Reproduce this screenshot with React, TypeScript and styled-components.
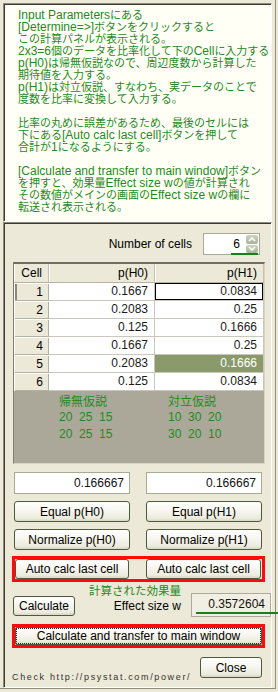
import styled, { createGlobalStyle } from "styled-components";

const GlobalStyle = createGlobalStyle`
  html, body {
    margin: 0;
    padding: 0;
    background: #ece9d8;
  }
  body {
    font-family: "Liberation Sans", Arial, sans-serif;
    font-size: 12px;
    color: #000;
  }
  * {
    box-sizing: border-box;
  }
`;

const GREEN = "#1f8a1f";

const help = [
  [
    "Input Parametersにある",
    "[Determine=>]ボタンをクリックすると",
    "この計算パネルが表示される。",
    "2x3=6個のデータを比率化して下のCellに入力する",
    "p(H0)は帰無仮説なので、周辺度数から計算した",
    "期待値を入力する。",
    "p(H1)は対立仮説、すなわち、実データのことで",
    "度数を比率に変換して入力する。",
  ],
  [
    "比率の丸めに誤差があるため、最後のセルには",
    "下にある[Auto calc last cell]ボタンを押して",
    "合計が1になるようにする。",
  ],
  [
    "[Calculate and transfer to main window]ボタン",
    "を押すと、効果量Effect size wの値が計算され",
    "その数値がメインの画面のEffect size wの欄に",
    "転送され表示される。",
  ],
];

const cells = [
  { h0: "0.1667", h1: "0.0834" },
  { h0: "0.2083", h1: "0.25" },
  { h0: "0.125", h1: "0.1666" },
  { h0: "0.1667", h1: "0.25" },
  { h0: "0.2083", h1: "0.1666" },
  { h0: "0.125", h1: "0.0834" },
];

// latin runs are drawn a bit larger than the kana/kanji, like the old java font
const mixed = (line: string) =>
  line
    .split(/([\x20-\x7e]+)/)
    .map((part, i) => (i % 2 === 1 ? <Latin key={i}>{part}</Latin> : part));

const Arrow = ({ up }: { up?: boolean }) => (
  <svg width="8" height="6" viewBox="0 0 8 6">
    <polyline
      points={up ? "1,5 4,2 7,5" : "1,1 4,4 7,1"}
      fill="none"
      stroke="#fff"
      strokeWidth="1.6"
    />
  </svg>
);

export default function App() {
  return (
    <Frame>
      <GlobalStyle />
      <HelpBox>
        {help.map((para, i) => (
          <Para key={i}>
            {para.map((line, j) => (
              <Line key={j}>{mixed(line)}</Line>
            ))}
          </Para>
        ))}
      </HelpBox>

      <Panel>
        <SpinRow>
          <span>Number of cells</span>
          <SpinBox>
            <SpinValue>6</SpinValue>
            <SpinButtons>
              <SpinButton>
                <Arrow up />
              </SpinButton>
              <SpinButton>
                <Arrow />
              </SpinButton>
            </SpinButtons>
            <Mark $left={27} $top={19} $width={27} />
          </SpinBox>
        </SpinRow>

        <Table>
          <HeadRow>
            <HeadCell>Cell</HeadCell>
            <HeadCell>p(H0)</HeadCell>
            <HeadCell>p(H1)</HeadCell>
          </HeadRow>
          {cells.map((c, i) => (
            <Row key={i}>
              <NumCell $current={i === 0}>{i + 1}</NumCell>
              <ValCell>{c.h0}</ValCell>
              <ValCell $focus={i === 0} $selected={i === 4}>
                {c.h1}
              </ValCell>
            </Row>
          ))}
          <Hypo>
            <div>
              <HypoTitle>帰無仮説</HypoTitle>
              <div>20  25  15</div>
              <div>20  25  15</div>
            </div>
            <div>
              <HypoTitle>対立仮説</HypoTitle>
              <div>10  30  20</div>
              <div>30  20  10</div>
            </div>
          </Hypo>
        </Table>

        <Pair $mt={8} $h={22}>
          <Field readOnly defaultValue="0.166667" />
          <Field readOnly defaultValue="0.166667" />
        </Pair>
        <Pair $mt={7} $h={21}>
          <Button>Equal p(H0)</Button>
          <Button>Equal p(H1)</Button>
        </Pair>
        <Pair $mt={7} $h={21}>
          <Button>Normalize p(H0)</Button>
          <Button>Normalize p(H1)</Button>
        </Pair>

        <Hilite $mt={9} $h={20}>
          <AutoGrid>
            <Button>Auto calc last cell</Button>
            <Button>Auto calc last cell</Button>
          </AutoGrid>
        </Hilite>

        <EffectRow>
          <CalcButton>Calculate</CalcButton>
          <EffectLabels>
            <EffectCaption>計算された効果量</EffectCaption>
            <EffectName>Effect size w</EffectName>
          </EffectLabels>
          <EffectBox>
            0.3572604
            <Mark $left={4} $top={18} $width={86} />
          </EffectBox>
        </EffectRow>

        <Hilite $mt={10} $h={18}>
          <TransferButton>Calculate and transfer to main window</TransferButton>
        </Hilite>

        <BottomRow>
          <CheckText>Check http://psystat.com/power/</CheckText>
          <CloseButton>Close</CloseButton>
        </BottomRow>
      </Panel>
    </Frame>
  );
}

const Frame = styled.div`
  width: 276px;
  height: 689px;
  padding: 3px 0 0 3px;
  border-right: 1px solid #8f8e80;
  border-bottom: 1px solid #8f8e80;
`;

const sunken = `
  border: 1px solid;
  border-color: #8d8b7d #ffffff #ffffff #8d8b7d;
  box-shadow: inset 1px 1px 0 #3a3932;
`;

const HelpBox = styled.div`
  ${sunken}
  width: 269px;
  height: 219px;
  padding: 4px 0 0 14px;
  background: #fffff6;
  color: ${GREEN};
  font-family: "Noto Sans CJK JP", sans-serif;
  font-size: 11px;
`;

const Para = styled.div`
  & + & {
    margin-top: 12px;
  }
`;

const Line = styled.div`
  height: 12px;
  line-height: 12px;
  white-space: nowrap;
`;

const Latin = styled.span`
  font-family: "Liberation Sans", Arial, sans-serif;
  font-size: 12px;
  line-height: 12px;
`;

const Panel = styled.div`
  ${sunken}
  width: 269px;
  height: 466px;
  padding: 10px 7px 0 9px;
  display: flex;
  flex-direction: column;
`;

const SpinRow = styled.div`
  height: 22px;
  display: flex;
  align-items: center;
  justify-content: flex-end;
  gap: 11px;
  padding-right: 4px;
`;

const SpinBox = styled.div`
  position: relative;
  width: 57px;
  height: 22px;
  display: flex;
  align-items: center;
  background: #fff;
  border: 1px solid #a6ac94;
`;

const SpinValue = styled.span`
  flex: 1;
  text-align: right;
  padding-right: 6px;
`;

const SpinButtons = styled.div`
  width: 12px;
  height: 100%;
  padding: 1px 0;
  margin-right: 1px;
  display: flex;
  flex-direction: column;
  gap: 1px;
`;

const SpinButton = styled.div`
  flex: 1;
  display: flex;
  align-items: center;
  justify-content: center;
  border-radius: 2px;
  background: linear-gradient(180deg, #ccd4c0, #a8b39a);
`;

const Mark = styled.div<{ $left: number; $top: number; $width: number }>`
  position: absolute;
  left: ${(p) => p.$left}px;
  top: ${(p) => p.$top}px;
  width: ${(p) => p.$width}px;
  height: 2px;
  background: #17821b;
`;

const Table = styled.div`
  width: 252px;
  margin-top: 7px;
  border: 1px solid;
  border-top: 2px solid #6f6d61;
  border-color: #6f6d61 #d8d5c4 #d8d5c4 #7f7e70;
`;

const grid = `
  display: grid;
  grid-template-columns: 35px 106px 1fr;
`;

const HeadRow = styled.div`
  ${grid}
  height: 19px;
  background: #ece9d8;
  border-bottom: 1px solid #b6b39f;
`;

const HeadCell = styled.div`
  line-height: 18px;
  text-align: right;
  padding-right: 6px;
  border-right: 1px solid #c5c2ae;
  box-shadow: inset 1px 0 0 #fff;
`;

const Row = styled.div`
  ${grid}
  height: 18px;
`;

const NumCell = styled.div<{ $current?: boolean }>`
  line-height: 18px;
  text-align: right;
  padding-right: 6px;
  background: #ece9d8;
  box-shadow: inset 1px 1px 0 #fff, inset -1px -1px 0 #b4b19e
    ${(p) => (p.$current ? ", inset 3px 0 0 #8a897b" : "")};
`;

const ValCell = styled.div<{ $focus?: boolean; $selected?: boolean }>`
  line-height: 17px;
  text-align: right;
  padding-right: 6px;
  color: ${(p) => (p.$selected ? "#fff" : "#1a1a1a")};
  background: ${(p) => (p.$selected ? "#8b9a6b" : "#fff")};
  border-right: 1px solid #c9c7bb;
  border-bottom: 1px solid #c9c7bb;
  box-shadow: ${(p) => (p.$focus ? "inset 0 0 0 1px #000" : "none")};
`;

const Hypo = styled.div`
  height: 72px;
  background: #aca899;
  display: grid;
  grid-template-columns: 109px 1fr;
  padding: 1px 0 0 45px;
  color: ${GREEN};
  line-height: 17px;
  white-space: pre;
`;

const HypoTitle = styled.div`
  font-family: "Noto Sans CJK JP", sans-serif;
  font-size: 12px;
`;

const Pair = styled.div<{ $mt: number; $h: number }>`
  display: grid;
  grid-template-columns: 116px 116px;
  column-gap: 16px;
  margin: ${(p) => p.$mt}px 0 0 1px;
  height: ${(p) => p.$h}px;
`;

const Field = styled.input`
  width: 100%;
  height: 100%;
  border: 1px solid #a6ac94;
  background: #fff;
  text-align: right;
  padding: 0 5px 0 0;
  font-family: "Liberation Sans", Arial, sans-serif;
  font-size: 12px;
  color: #111;
  outline: none;
`;

const Button = styled.button`
  display: block;
  width: 100%;
  height: 100%;
  padding: 0;
  font-family: "Liberation Sans", Arial, sans-serif;
  font-size: 12px;
  color: #000;
  white-space: nowrap;
  border: 1px solid #4d5a3e;
  border-radius: 3px;
  background: linear-gradient(
    180deg,
    #ffffff 0%,
    #f7f6ef 45%,
    #ecebdf 85%,
    #d8d5c2 100%
  );
  cursor: pointer;
`;

const Hilite = styled.div<{ $mt: number; $h: number }>`
  margin: ${(p) => p.$mt}px 0 0 2px;
  width: 247px;
  height: ${(p) => p.$h}px;
  outline: 3px solid #ff0a0a;
`;

const AutoGrid = styled.div`
  display: grid;
  grid-template-columns: 114px 115px;
  column-gap: 17px;
  height: 100%;
`;

const EffectRow = styled.div`
  margin-top: 4px;
  height: 34px;
  display: grid;
  grid-template-columns: 62px 1fr 80px;
  align-items: end;
`;

const CalcButton = styled(Button)`
  height: 20px;
  margin-bottom: 1px;
`;

const EffectLabels = styled.div`
  height: 34px;
  display: flex;
  flex-direction: column;
  justify-content: space-between;
  align-items: flex-end;
  padding: 0 10px 3px 0;
`;

const EffectCaption = styled.div`
  align-self: flex-start;
  margin-left: 14px;
  color: ${GREEN};
  font-family: "Noto Sans CJK JP", sans-serif;
  font-size: 11.5px;
  line-height: 15px;
  white-space: nowrap;
`;

const EffectName = styled.div`
  line-height: 15px;
  white-space: nowrap;
`;

const EffectBox = styled.div`
  position: relative;
  height: 24px;
  line-height: 21px;
  text-align: right;
  padding-right: 5px;
  background: #f1efe3;
  border: 1px solid #aaa99a;
  color: #111;
`;

const TransferButton = styled(Button)`
  border-radius: 2px;
  outline: 1px dotted #2a2a2a;
  outline-offset: -2px;
`;

const BottomRow = styled.div`
  margin-top: 12px;
  display: flex;
  justify-content: space-between;
  align-items: flex-end;
`;

const CheckText = styled.div`
  margin: 0 0 -4px -1px;
  font-size: 9px;
  line-height: 10px;
  letter-spacing: 1.65px;
  color: #333;
  white-space: nowrap;
`;

const CloseButton = styled(Button)`
  width: 62px;
  height: 21px;
  margin-right: 2px;
`;
